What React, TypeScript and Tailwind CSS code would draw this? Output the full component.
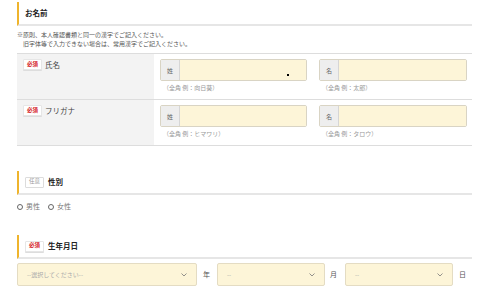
import React from "react";

const Badge = ({ type }: { type: "req" | "opt" }) =>
  type === "req" ? (
    <span className="inline-flex items-center justify-center w-[19px] h-[11px] bg-white border border-[#e6e6e6] rounded-[1px] text-[5.5px] font-bold text-[#d3141c] leading-none shadow-[0_1px_0_#ddd]">
      必須
    </span>
  ) : (
    <span className="inline-flex items-center justify-center w-[19px] h-[11px] bg-white border border-[#dcdcdc] rounded-[1px] text-[5.5px] text-[#999] leading-none">
      任意
    </span>
  );

const Heading = ({ children, badge, h }: { children: React.ReactNode; badge?: "req" | "opt"; h: string }) => (
  <div className={`flex items-center gap-[4px] border-l-2 border-[#efb42c] border-b-2 border-b-[#e6e6e6] pl-[6px] ${h}`}>
    {badge && <Badge type={badge} />}
    <span className="text-[7.5px] font-bold text-[#222] leading-none">{children}</span>
  </div>
);

const NameInput = ({ prefix, hint, w, dot }: { prefix: string; hint: string; w: string; dot?: boolean }) => (
  <div className={`flex flex-col ${w}`}>
    <div className="flex h-[22px] rounded-[2px] border border-[#d9d4c4] overflow-hidden">
      <div className="w-[19px] bg-[#eeeeee] border-r border-[#d6d6d6] flex items-center justify-center text-[6px] text-[#666]">
        {prefix}
      </div>
      <div className="relative flex-1 bg-[#fdf5d8]">
        {dot && <span className="absolute left-[107px] top-[14px] w-[2px] h-[2px] bg-black" />}
      </div>
    </div>
    <div className="mt-[3px] pl-[3px] text-[6px] leading-[8px] text-[#999]">{hint}</div>
  </div>
);

const Row = ({ label, hints, dot }: { label: string; hints: [string, string]; dot?: boolean }) => (
  <div className="flex h-[46px] border-b border-[#dddddd]">
    <div className="w-[137px] bg-[#f3f3f3] pl-[6px] pt-[5px] flex items-start gap-[3px]">
      <Badge type="req" />
      <span className="text-[7.5px] leading-[11px] text-[#444]">{label}</span>
    </div>
    <div className="flex-1 pl-[6px] pt-[5px] flex gap-[12px]">
      <NameInput prefix="姓" hint={hints[0]} w="w-[147px]" dot={dot} />
      <NameInput prefix="名" hint={hints[1]} w="w-[148px]" />
    </div>
  </div>
);

const Chevron = () => (
  <svg width="6" height="4" viewBox="0 0 6 4" className="text-[#777]">
    <path d="M0.5 0.5 L3 3 L5.5 0.5" fill="none" stroke="currentColor" strokeWidth="0.8" />
  </svg>
);

const Select = ({ text, w }: { text: string; w: string }) => (
  <div className={`flex items-center justify-between h-[23px] ${w} bg-[#fdf5d8] border border-[#e4dcc3] rounded-[2px] pl-[9px] pr-[9px]`}>
    <span className="text-[6px] text-[#aaa] leading-none">{text}</span>
    <Chevron />
  </div>
);

const Radio = ({ label }: { label: string }) => (
  <div className="flex items-center gap-[3px]">
    <span className="w-[6px] h-[6px] rounded-full border border-[#666] bg-white" />
    <span className="text-[7px] text-[#777] leading-none">{label}</span>
  </div>
);

export default function App() {
  return (
    <div className="w-[500px] h-[288px] bg-white overflow-hidden font-['Noto_Sans_CJK_JP',sans-serif] text-[#333]">
      <div className="pl-[17px] pr-[28px] pt-[2px]">
        <Heading h="h-[24px]">お名前</Heading>
        <div className="mt-[4px] text-[6px] leading-[9px] text-[#555]">
          <div>※原則、本人確認書類と同一の漢字でご記入ください。</div>
          <div>　旧字体等で入力できない場合は、常用漢字でご記入ください。</div>
        </div>
        <div className="mt-[5px] border-t border-[#dddddd]">
          <Row label="氏名" hints={["（全角 例：向日葵）", "（全角 例：太郎）"]} dot />
          <Row label="フリガナ" hints={["（全角 例：ヒマワリ）", "（全角 例：タロウ）"]} />
        </div>

        <div className="mt-[25px]">
          <Heading badge="opt" h="h-[24px]">性別</Heading>
        </div>
        <div className="mt-[8px] flex gap-[8px]">
          <Radio label="男性" />
          <Radio label="女性" />
        </div>

        <div className="mt-[25px]">
          <Heading badge="req" h="h-[24px]">生年月日</Heading>
        </div>
        <div className="mt-[4px] flex items-center">
          <Select text="--選択してください--" w="w-[180px]" />
          <span className="ml-[6px] w-[14px] text-[7px] text-[#555]">年</span>
          <Select text="--" w="w-[108px]" />
          <span className="ml-[5px] w-[15px] text-[7px] text-[#555]">月</span>
          <Select text="--" w="w-[108px]" />
          <span className="ml-[6px] text-[7px] text-[#555]">日</span>
        </div>
      </div>
    </div>
  );
}
